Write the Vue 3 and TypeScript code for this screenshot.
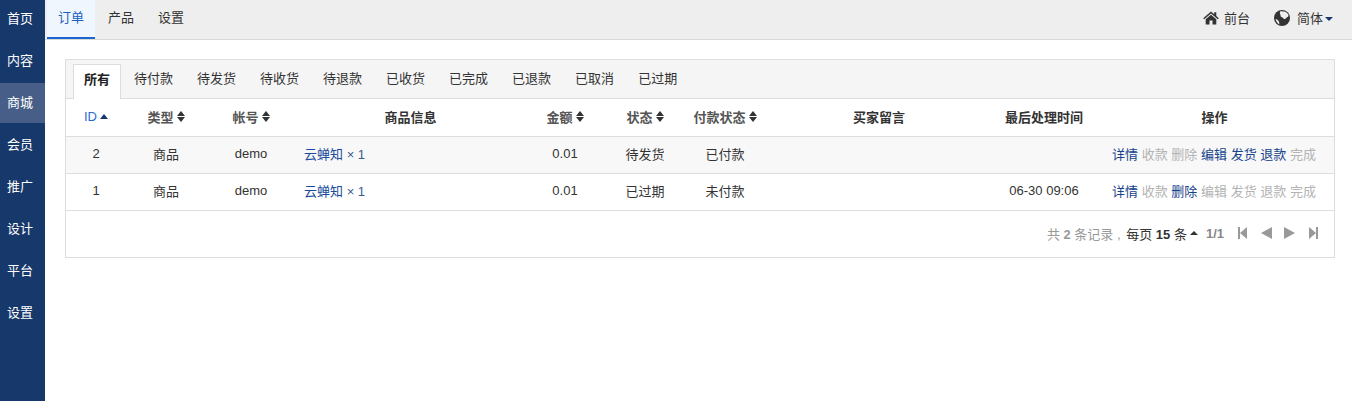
<script setup lang="ts">
const nav = ['首页', '内容', '商城', '会员', '推广', '设计', '平台', '设置']
const subTabs = ['订单', '产品', '设置']
const tabs = ['所有', '待付款', '待发货', '待收货', '待退款', '已收货', '已完成', '已退款', '已取消', '已过期']
interface Col { label: string; width: number; sort?: boolean; on?: boolean }
const cols: Col[] = [
  { label: 'ID', width: 60, on: true },
  { label: '类型', width: 80, sort: true },
  { label: '帐号', width: 90, sort: true },
  { label: '商品信息', width: 229 },
  { label: '金额', width: 80, sort: true },
  { label: '状态', width: 80, sort: true },
  { label: '付款状态', width: 80, sort: true },
  { label: '买家留言', width: 228 },
  { label: '最后处理时间', width: 102 },
  { label: '操作', width: 239 }
]
interface Act { t: string; on: boolean }
const mk = (on: string[]): Act[] =>
  ['详情', '收款', '删除', '编辑', '发货', '退款', '完成'].map((t) => ({ t, on: on.includes(t) }))
const rows = [
  { id: 2, state: '待发货', pay: '已付款', time: '', acts: mk(['详情', '编辑', '发货', '退款']) },
  { id: 1, state: '已过期', pay: '未付款', time: '06-30 09:06', acts: mk(['详情', '删除']) }
]
</script>

<template>
  <div class="page">
    <aside class="side">
      <a v-for="n in nav" :key="n" class="side-item" :class="{ active: n === '商城' }">{{ n }}</a>
    </aside>
    <div class="main">
      <header class="top">
        <a v-for="(s, i) in subTabs" :key="s" class="top-tab" :class="{ active: i === 0 }">{{ s }}</a>
        <div class="top-right">
          <a class="top-link">
            <svg class="ico-home" viewBox="0 0 16 14" width="16" height="14">
              <path d="M8 0.6 L0.2 7.2 L1.2 8.3 L8 2.6 L14.8 8.3 L15.8 7.2 L13.3 5.1 V1.2 H11.2 V3.3 Z" fill="#333" />
              <path d="M8 3.8 L2.7 8.2 V13.6 H6.5 V9.6 H9.5 V13.6 H13.3 V8.2 Z" fill="#333" />
            </svg>
            <span class="lift">前台</span>
          </a>
          <a class="top-link lang">
            <svg class="ico-globe" viewBox="0 0 16 16" width="16" height="16">
              <circle cx="8" cy="8" r="8" fill="#333" />
              <path d="M6 1.6 C8 0.9 12 1.2 14 4 C14.8 5.4 14.6 6.6 13.6 7 C12.6 7.3 12 8.4 11 9 C10 9.6 9.6 8.4 8.8 7.8 C7.6 7.2 6.6 7 6.6 5.8 C6.6 4.6 5.4 3.2 6 1.6 Z" fill="#eee" />
              <path d="M1.6 9 C2.8 9.2 4 10 4.6 11 C5 12 5.6 13 5.2 14.4 C3.6 13.6 2 11.4 1.6 9 Z" fill="#eee" />
            </svg>
            <span class="lift">简体</span><i class="caret down"></i>
          </a>
        </div>
      </header>
      <section class="panel">
        <nav class="tabs">
          <a v-for="(t, i) in tabs" :key="t" class="tab" :class="{ active: i === 0 }">{{ t }}</a>
        </nav>
        <table class="grid">
          <colgroup>
            <col v-for="c in cols" :key="c.label" :style="{ width: c.width + 'px' }" />
          </colgroup>
          <thead>
            <tr>
              <th v-for="c in cols" :key="c.label">
                <span class="th-in" :class="{ on: c.on, sortable: c.sort }">
                  {{ c.label }}
                  <i v-if="c.on" class="sort-up"></i>
                  <span v-if="c.sort" class="sort-both"><i></i><i></i></span>
                </span>
              </th>
            </tr>
          </thead>
          <tbody>
            <tr v-for="r in rows" :key="r.id">
              <td>{{ r.id }}</td>
              <td>商品</td>
              <td>demo</td>
              <td class="goods"><a>云蝉知</a> <span class="qty">× 1</span></td>
              <td>0.01</td>
              <td>{{ r.state }}</td>
              <td>{{ r.pay }}</td>
              <td></td>
              <td>{{ r.time }}</td>
              <td class="acts">
                <a v-for="a in r.acts" :key="a.t" :class="{ off: !a.on }">{{ a.t }}</a>
              </td>
            </tr>
          </tbody>
        </table>
        <footer class="pager">
          <span class="muted">共 <b>2</b> 条记录 , </span>
          <span class="per">每页 <b>15</b> 条</span><i class="caret up"></i>
          <b class="page-num">1/1</b>
          <span class="ctrls">
            <svg viewBox="0 0 9 12" width="9" height="12"><path d="M0 0h2v12H0zM9 0v12L2 6z" /></svg>
            <svg viewBox="0 0 12 12" width="11" height="12" preserveAspectRatio="none"><path d="M12 0v12L0 6z" /></svg>
            <svg viewBox="0 0 12 12" width="11" height="12" preserveAspectRatio="none"><path d="M0 0v12l12-6z" /></svg>
            <svg viewBox="0 0 9 12" width="9" height="12"><path d="M7 0h2v12H7zM0 0v12l7-6z" /></svg>
          </span>
        </footer>
      </section>
    </div>
  </div>
</template>

<style>
html, body { margin: 0; background: #fff; }
</style>

<style scoped>
.page {
  display: flex;
  height: 401px;
  overflow: hidden;
  font-family: "Liberation Sans", "Noto Sans CJK SC", sans-serif;
  font-size: 13px;
  color: #333;
}
.side {
  width: 45px;
  flex: none;
  background: #17386a;
  display: flex;
  flex-direction: column;
  gap: 2px;
}
.side-item {
  height: 40px;
  line-height: 37px;
  padding-left: 7px;
  color: #fff;
}
.side-item.active {
  background: #475f88;
  line-height: 39px;
  margin-top: -1px;
  margin-bottom: 1px;
}
.main { flex: 1; min-width: 0; }
.top {
  height: 40px;
  box-sizing: border-box;
  background: #eee;
  border-bottom: 1px solid #d9d9d9;
  display: flex;
  gap: 2px;
  padding-left: 2px;
}
.top-tab {
  width: 48px;
  height: 39px;
  text-align: center;
  line-height: 36px;
  box-sizing: border-box;
  color: #333;
}
.top-tab.active {
  background: #f0f6fd;
  color: #1a5fc4;
  border-bottom: 2px solid #1a67d2;
}
.top-right { margin-left: auto; display: flex; align-items: center; padding: 0 19px 3px 0; box-sizing: border-box; height: 39px; }
.top-link { display: flex; align-items: center; color: #333; }
.lift { margin-bottom: 2px; }
.ico-home { margin-right: 5px; }
.lang { margin-left: 24px; }
.ico-globe { margin-right: 7px; }
.caret { display: inline-block; width: 0; height: 0; border-left: 4px solid transparent; border-right: 4px solid transparent; }
.caret.down { border-top: 4px solid #17386a; margin-left: 2px; margin-top: 2px; }
.caret.up { border-bottom: 4px solid #333; margin-left: 3px; }
.panel {
  margin: 19px 17px 0 20px;
  border: 1px solid #ddd;
  height: 197px;
}
.tabs {
  height: 39px;
  background: #f5f5f5;
  border-bottom: 1px solid #ddd;
  display: flex;
  padding: 4px 0 0 7px;
  box-sizing: border-box;
}
.tab {
  height: 34px;
  line-height: 30px;
  padding: 0 12px;
  color: #333;
  white-space: nowrap;
}
.tab.active {
  background: #fff;
  border: 1px solid #ddd;
  border-bottom: none;
  height: 35px;
  font-weight: bold;
  padding: 0 10px;
  margin-right: 1px;
  color: #222;
  box-sizing: border-box;
  width: 48px;
  text-align: center;
}
.grid {
  width: 1268px;
  table-layout: fixed;
  border-collapse: collapse;
  text-align: center;
}
th {
  height: 37px;
  padding: 0 0 2px;
  font-weight: bold;
  border-bottom: 1px solid #ddd;
  color: #333;
  white-space: nowrap;
  box-sizing: border-box;
}
.th-in { display: inline-flex; align-items: center; gap: 3px; }
.th-in.sortable { color: #555; }
.th-in.on { color: #2a6ad6; font-weight: normal; }
.sort-up { display: block; width: 0; height: 0; border-left: 4.5px solid transparent; border-right: 4.5px solid transparent; border-bottom: 5px solid #17386a; }
.sort-both { display: flex; flex-direction: column; gap: 1px; }
.sort-both i { display: block; width: 0; height: 0; border-left: 4.5px solid transparent; border-right: 4.5px solid transparent; }
.sort-both i:first-child { border-bottom: 5px solid #333; }
.sort-both i:last-child { border-top: 5px solid #333; }
td {
  height: 37px;
  padding: 0 0 2px;
  border-bottom: 1px solid #ddd;
  box-sizing: border-box;
  white-space: nowrap;
}
tbody tr:first-child td { background: #f8f8f8; }
.goods { text-align: left; padding-left: 8px; }
.goods a { color: #1a4a9c; }
.qty { color: #3a5a8c; }
.acts { text-align: right; padding-right: 18px; }
.acts a { color: #15428b; margin-left: 3.67px; }
.acts a.off { color: #b3b3b3; }
.pager {
  height: 46px;
  display: flex;
  align-items: center;
  justify-content: flex-end;
  padding-right: 16px;
  padding-bottom: 1px;
  box-sizing: border-box;
  white-space: pre;
}
.muted { color: #999; margin-right: 2px; }
.per { color: #333; }
.per b { font-weight: bold; }
.page-num { color: #888; margin-left: 8px; }
.ctrls { display: flex; align-items: center; gap: 14px; margin-left: 14px; }
.ctrls svg { fill: #999; display: block; }
.ctrls svg:nth-child(2) { margin-right: -2px; }
</style>
